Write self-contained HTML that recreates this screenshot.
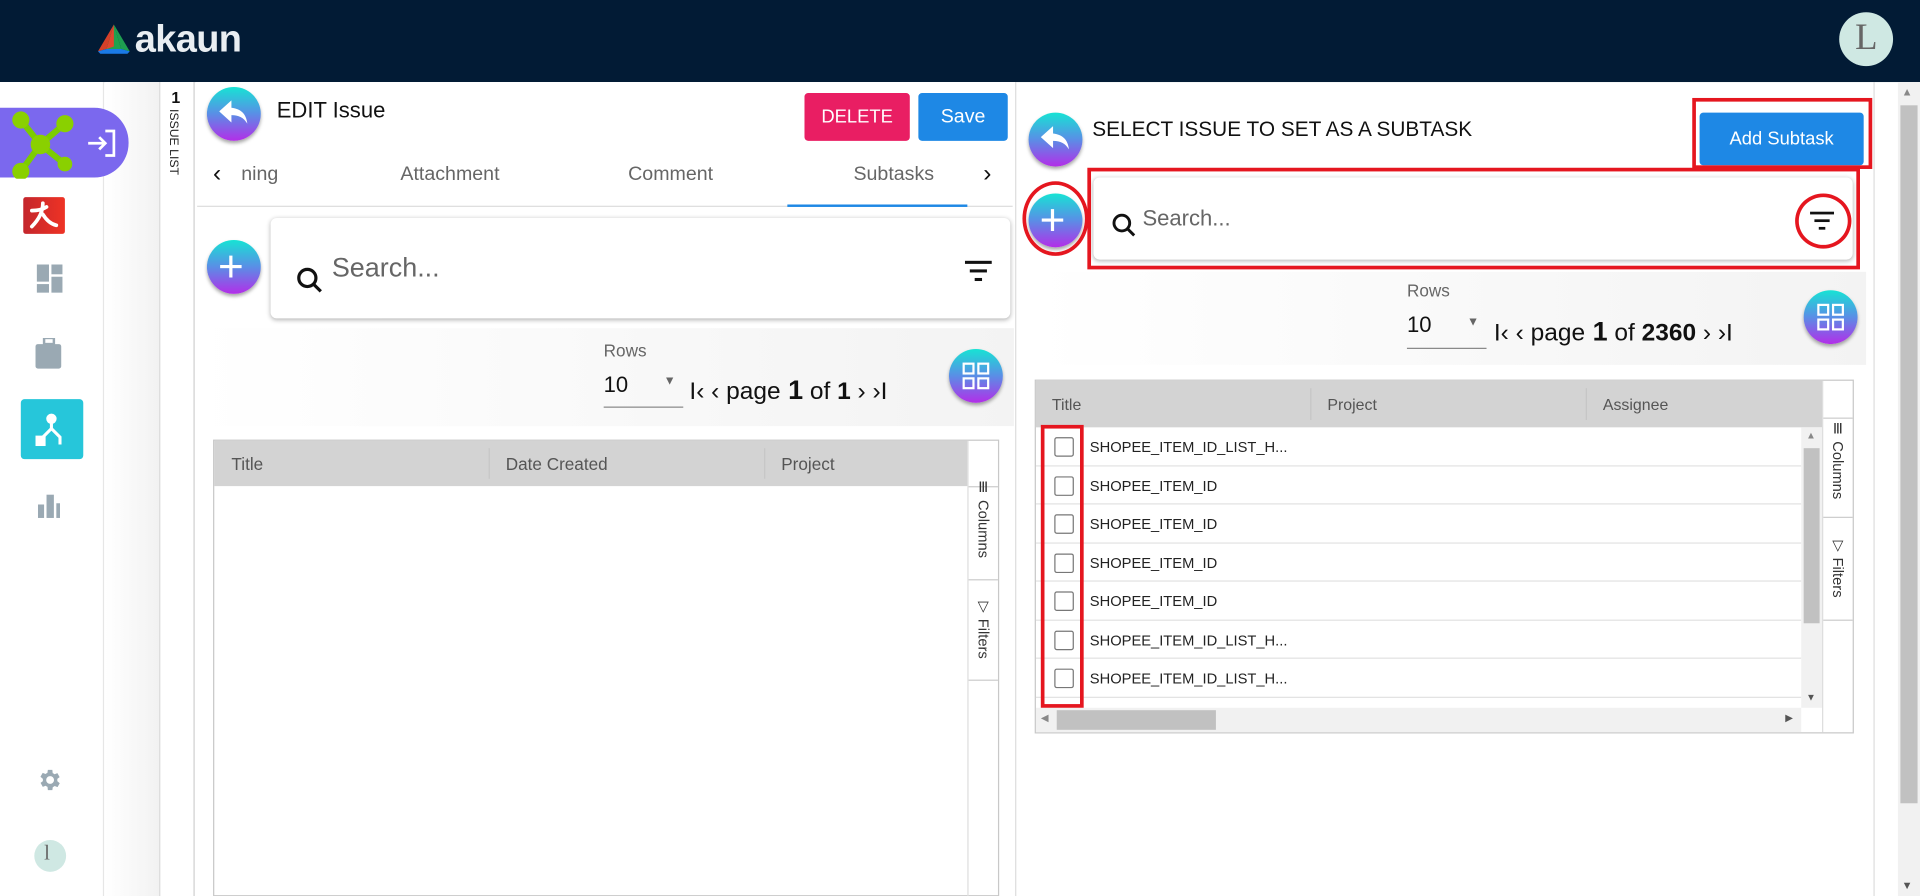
<!DOCTYPE html>
<html><head><meta charset="utf-8">
<style>
*{box-sizing:border-box;margin:0;padding:0}
html,body{width:1920px;height:896px;overflow:hidden;background:#fff;font-family:"Liberation Sans",sans-serif}
#w{position:absolute;left:0;top:0;width:1568px;height:732px;transform:scale(1.22449);transform-origin:0 0;overflow:hidden}
.a{position:absolute}
.hdr{left:0;top:0;width:1568px;height:67px;background:#021b35}
.circ{position:absolute;border-radius:50%;background:linear-gradient(180deg,#17e3d4 0%,#5a8ee6 50%,#b32ee8 100%);box-shadow:0 2px 3px rgba(0,0,0,.35)}
.btn{position:absolute;color:#fff;font-size:15px;display:flex;align-items:center;justify-content:center;border-radius:3px}
.card{position:absolute;background:#fff;border-radius:5px;box-shadow:0 1px 4px rgba(0,0,0,.3)}
.hd{position:absolute;background:#d3d3d3;color:#555;font-size:14px}
.t{position:absolute;white-space:nowrap}
.vt{position:absolute;writing-mode:vertical-rl;font-size:12px;color:#333;white-space:nowrap}
.red{position:absolute;border:3px solid #e5161f}
.row{position:absolute;left:0;width:625px;height:31.5px;border-bottom:1px solid #e2e2e2;font-size:12px;color:#222}
.cb{position:absolute;left:15px;top:8px;width:16px;height:16px;border:1.5px solid #777;border-radius:2px;background:#fff}
</style></head><body><div id="w">
<div class="a hdr"></div>
<svg class="a" style="left:80px;top:20px" width="26" height="24" viewBox="0 0 26 24"><path d="M13 0L0 22 7 20Z" fill="#d64029"/><path d="M13 0L26 22 19 20Z" fill="#1e9e50"/><path d="M13 0L7 20 19 20Z" fill="#1fa24f"/><path d="M0 22L7 20 19 20 26 22 24 24 2 24Z" fill="#1a7ae6"/><path d="M13 0L7 20 13 18Z" fill="#e0462f"/></svg>
<div class="t" style="left:110px;top:14px;color:#e9eef2;font-size:31px;font-weight:bold;letter-spacing:-0.5px">akaun</div>
<div class="a" style="left:1502px;top:10px;width:44px;height:44px;border-radius:50%;background:#cfe8e3"></div>
<div class="t" style="left:1515px;top:14px;font-family:'Liberation Serif',serif;font-size:30px;color:#666">L</div>

<!-- sidebar -->
<div class="a" style="left:0;top:67px;width:85px;height:665px;background:#fff;border-right:1px solid #e6e6e6"></div>
<div class="a" style="left:86px;top:67px;width:45px;height:665px;background:linear-gradient(90deg,#fff,#f2f2f2);border-right:1px solid #d8d8d8"></div>
<div class="a" style="left:0;top:88px;width:105px;height:57px;background:#7b68ee;border-radius:0 28px 28px 0"></div>
<svg class="a" style="left:5px;top:88px" width="56" height="58" viewBox="0 0 56 58"><g stroke="#7ccc00" stroke-width="5"><line x1="12" y1="10" x2="28" y2="30"/><line x1="48" y1="13" x2="28" y2="30"/><line x1="28" y1="30" x2="48" y2="46"/><line x1="28" y1="30" x2="12" y2="52"/></g><g fill="#8ad000"><circle cx="12" cy="10" r="7"/><circle cx="48" cy="13" r="7"/><circle cx="28" cy="30" r="8"/><circle cx="48" cy="46" r="6"/><circle cx="12" cy="52" r="7"/></g></svg>
<svg class="a" style="left:70px;top:104px" width="28" height="26" viewBox="0 0 28 26" fill="none" stroke="#fff" stroke-width="2.2"><path d="M2 13h14M11 8l5 5-5 5"/><path d="M16 3h7v20h-7"/></svg>
<div class="a" style="left:19px;top:161px;width:34px;height:30px;background:linear-gradient(90deg,#c4262c,#ee3325);border-radius:2px"></div>
<svg class="a" style="left:22px;top:164px" width="28" height="24" viewBox="0 0 28 24" fill="none" stroke="#fff" stroke-width="3" stroke-linecap="round"><path d="M4 8c5 0 9-1 12-3M13 2c0 8-4 14-9 19M13 11c3 5 7 8 11 9"/></svg>
<svg class="a" style="left:30px;top:216px" width="22" height="24" viewBox="0 0 22 24" fill="#9aa9b3"><rect x="0" y="0" width="10" height="14"/><rect x="12" y="0" width="9" height="8"/><rect x="0" y="16" width="10" height="7"/><rect x="12" y="10" width="9" height="13"/></svg>
<svg class="a" style="left:29px;top:276px" width="22" height="26" viewBox="0 0 22 26" fill="#9aa9b3"><rect x="7" y="0" width="8" height="5" fill="none" stroke="#9aa9b3" stroke-width="2"/><rect x="0" y="5" width="21" height="20" rx="2"/></svg>
<div class="a" style="left:17px;top:326px;width:51px;height:49px;background:#26c6da;border-radius:3px"></div>
<svg class="a" style="left:29px;top:337px" width="28" height="28" viewBox="0 0 28 28" fill="none" stroke="#fff" stroke-width="2.5"><circle cx="13" cy="5" r="3" fill="#fff"/><path d="M13 7v6M13 13l-8 8M13 13l7 7v6"/><rect x="1" y="20" width="6" height="6" fill="#fff"/></svg>
<svg class="a" style="left:31px;top:400px" width="20" height="24" viewBox="0 0 20 24" fill="#9aa9b3"><rect x="0" y="12" width="5" height="11"/><rect x="7" y="4" width="6" height="19"/><rect x="15" y="11" width="3" height="12"/></svg>
<svg class="a" style="left:29px;top:626px" width="22" height="22" viewBox="0 0 24 24" fill="#9aa9b3"><path d="M19.4 13a7.5 7.5 0 000-2l2.1-1.6-2-3.5-2.5 1a7 7 0 00-1.7-1L15 3h-4l-.4 2.6a7 7 0 00-1.7 1l-2.5-1-2 3.5L6.6 11a7.5 7.5 0 000 2l-2.1 1.6 2 3.5 2.5-1a7 7 0 001.7 1L11 21h4l.4-2.6a7 7 0 001.7-1l2.5 1 2-3.5zM13 15.5a3.5 3.5 0 110-7 3.5 3.5 0 010 7z"/></svg>
<div class="a" style="left:28px;top:686px;width:26px;height:26px;border-radius:50%;background:#cfe8e3"></div>
<div class="t" style="left:36px;top:687px;font-family:'Liberation Serif',serif;font-size:17px;color:#666">l</div>

<div class="a" style="left:131px;top:67px;width:28px;height:665px;background:#fff;border-right:1px solid #cfcfcf"></div>
<div class="t" style="left:140px;top:72px;font-size:13px;font-weight:bold;color:#111">1</div>
<div class="vt" style="left:136px;top:89px;font-size:10px;color:#222">ISSUE LIST</div>

<!-- left panel -->
<div class="a" style="left:160px;top:67px;width:670px;height:665px;background:#fff;border-right:1px solid #ddd"></div>
<div class="circ" style="left:169px;top:71px;width:44px;height:44px"></div>
<svg class="a" style="left:179px;top:82px" width="24" height="20" viewBox="0 0 24 20"><path d="M10 0L0 9l10 9v-6c6 0 10 2 13 7-1-8-5-12-13-13z" fill="#fff"/></svg>
<div class="t" style="left:226px;top:80px;font-size:18px;color:#111">EDIT Issue</div>
<div class="btn" style="left:657px;top:76px;width:86px;height:39px;background:#e91e63">DELETE</div>
<div class="btn" style="left:750px;top:76px;width:73px;height:39px;background:#1e88e5;font-size:16px">Save</div>
<div class="a" style="left:161px;top:168px;width:666px;height:1px;background:#ddd"></div>
<div class="t" style="left:174px;top:131px;font-size:20px;color:#111">‹</div>
<div class="t" style="left:197px;top:134px;font-size:16px;color:#666">ning</div>
<div class="t" style="left:327px;top:134px;font-size:16px;color:#666">Attachment</div>
<div class="t" style="left:513px;top:134px;font-size:16px;color:#666">Comment</div>
<div class="t" style="left:697px;top:134px;font-size:16px;color:#666">Subtasks</div>
<div class="a" style="left:643px;top:167px;width:147px;height:2px;background:#1e88e5"></div>
<div class="t" style="left:803px;top:131px;font-size:20px;color:#111">›</div>
<div class="circ" style="left:169px;top:196px;width:44px;height:44px"></div>
<div class="t" style="left:178px;top:196px;font-size:36px;color:#fff;line-height:44px">+</div>
<div class="card" style="left:221px;top:178px;width:604px;height:82px"></div>
<svg class="a" style="left:241px;top:217px" width="24" height="24" viewBox="0 0 24 24" fill="none" stroke="#111" stroke-width="2.6"><circle cx="10" cy="10" r="7"/><path d="M15 15l6 6"/></svg>
<div class="t" style="left:271px;top:206px;font-size:22px;color:#666">Search...</div>
<svg class="a" style="left:788px;top:212px" width="22" height="18" viewBox="0 0 22 18" fill="#111"><rect x="0" y="1" width="22" height="2.5"/><rect x="4" y="8" width="14" height="2.5"/><rect x="8" y="15" width="6" height="2.5"/></svg>
<div class="a" style="left:160px;top:268px;width:668px;height:80px;background:linear-gradient(90deg,#fff,#f3f3f3)"></div>
<div class="t" style="left:493px;top:278px;font-size:14px;color:#666">Rows</div>
<div class="t" style="left:493px;top:304px;font-size:18px;color:#111">10</div>
<div class="t" style="left:542px;top:306px;font-size:10px;color:#666">▼</div>
<div class="a" style="left:493px;top:332px;width:65px;height:1px;background:#888"></div>
<div class="t" style="left:563px;top:306px;font-size:20px;color:#111">I‹ ‹ page<b style="font-size:22px"> 1</b> of <b>1</b> › ›I</div>
<div class="circ" style="left:775px;top:285px;width:44px;height:44px"></div>
<svg class="a" style="left:785px;top:295px" width="24" height="24" viewBox="0 0 24 24" fill="none" stroke="#fff" stroke-width="1.8"><rect x="2" y="2" width="8" height="8"/><rect x="14" y="2" width="8" height="8"/><rect x="2" y="14" width="8" height="8"/><rect x="14" y="14" width="8" height="8"/></svg>
<div class="a" style="left:174px;top:359px;width:642px;height:373px;border:1px solid #c8c8c8"></div>
<div class="hd" style="left:175px;top:360px;width:615px;height:37px"></div>
<div class="t" style="left:189px;top:371px;font-size:14px;color:#555">Title</div>
<div class="a" style="left:399px;top:366px;width:1px;height:25px;background:#c6c6c6"></div>
<div class="t" style="left:413px;top:371px;font-size:14px;color:#555">Date Created</div>
<div class="a" style="left:624px;top:366px;width:1px;height:25px;background:#c6c6c6"></div>
<div class="t" style="left:638px;top:371px;font-size:14px;color:#555">Project</div>
<div class="a" style="left:790px;top:360px;width:1px;height:372px;background:#ddd"></div>
<div class="a" style="left:791px;top:397px;width:24px;height:1px;background:#ccc"></div>
<div class="vt" style="left:796px;top:391px">Ⅲ Columns</div>
<div class="a" style="left:791px;top:473px;width:24px;height:1px;background:#ccc"></div>
<div class="vt" style="left:796px;top:488px">▽ Filters</div>
<div class="a" style="left:791px;top:555px;width:24px;height:1px;background:#ccc"></div>

<!-- right panel -->
<div class="circ" style="left:840px;top:92px;width:44px;height:44px"></div>
<svg class="a" style="left:850px;top:103px" width="24" height="20" viewBox="0 0 24 20"><path d="M10 0L0 9l10 9v-6c6 0 10 2 13 7-1-8-5-12-13-13z" fill="#fff"/></svg>
<div class="t" style="left:892px;top:96px;font-size:17px;color:#111">SELECT ISSUE TO SET AS A SUBTASK</div>
<div class="btn" style="left:1388px;top:92px;width:134px;height:43px;background:#1e88e5">Add Subtask</div>
<div class="red" style="left:1382px;top:80px;width:147px;height:58px"></div>
<div class="circ" style="left:840px;top:158px;width:44px;height:44px"></div>
<div class="t" style="left:849px;top:158px;font-size:36px;color:#fff;line-height:44px">+</div>
<div class="a" style="left:835px;top:148px;width:54px;height:61px;border:3px solid #e5161f;border-radius:50%"></div>
<div class="card" style="left:893px;top:145px;width:620px;height:67px"></div>
<div class="red" style="left:888px;top:137px;width:631px;height:83px"></div>
<svg class="a" style="left:907px;top:173px" width="22" height="22" viewBox="0 0 24 24" fill="none" stroke="#111" stroke-width="2.6"><circle cx="10" cy="10" r="7"/><path d="M15 15l6 6"/></svg>
<div class="t" style="left:933px;top:168px;font-size:18px;color:#666">Search...</div>
<svg class="a" style="left:1478px;top:172px" width="20" height="16" viewBox="0 0 22 18" fill="#111"><rect x="0" y="1" width="22" height="2.5"/><rect x="4" y="8" width="14" height="2.5"/><rect x="8" y="15" width="6" height="2.5"/></svg>
<div class="a" style="left:1466px;top:158px;width:46px;height:45px;border:3px solid #e5161f;border-radius:50%"></div>
<div class="a" style="left:845px;top:222px;width:679px;height:76px;background:linear-gradient(90deg,#fff,#f3f3f3)"></div>
<div class="t" style="left:1149px;top:229px;font-size:14px;color:#666">Rows</div>
<div class="t" style="left:1149px;top:255px;font-size:18px;color:#111">10</div>
<div class="t" style="left:1198px;top:258px;font-size:10px;color:#666">▼</div>
<div class="a" style="left:1149px;top:284px;width:65px;height:1px;background:#888"></div>
<div class="t" style="left:1220px;top:258px;font-size:20px;color:#111">I‹ ‹ page<b style="font-size:22px"> 1</b> of <b> 2360</b> › ›I</div>
<div class="circ" style="left:1473px;top:237px;width:44px;height:44px"></div>
<svg class="a" style="left:1483px;top:247px" width="24" height="24" viewBox="0 0 24 24" fill="none" stroke="#fff" stroke-width="1.8"><rect x="2" y="2" width="8" height="8"/><rect x="14" y="2" width="8" height="8"/><rect x="2" y="14" width="8" height="8"/><rect x="14" y="14" width="8" height="8"/></svg>

<div class="a" style="left:845px;top:310px;width:669px;height:289px;border:1px solid #c8c8c8;overflow:hidden">
 <div class="hd" style="left:0;top:0;width:642px;height:38px"></div>
 <div class="t" style="left:13px;top:12px;font-size:13px;color:#555">Title</div>
 <div class="a" style="left:224px;top:6px;width:1px;height:26px;background:#c6c6c6"></div>
 <div class="t" style="left:238px;top:12px;font-size:13px;color:#555">Project</div>
 <div class="a" style="left:449px;top:6px;width:1px;height:26px;background:#c6c6c6"></div>
 <div class="t" style="left:463px;top:12px;font-size:13px;color:#555">Assignee</div>
 <div class="row" style="top:38px"><div class="cb"></div><span class="t" style="left:44px;top:9px">SHOPEE_ITEM_ID_LIST_H...</span></div>
 <div class="row" style="top:69.5px"><div class="cb"></div><span class="t" style="left:44px;top:9px">SHOPEE_ITEM_ID</span></div>
 <div class="row" style="top:101px"><div class="cb"></div><span class="t" style="left:44px;top:9px">SHOPEE_ITEM_ID</span></div>
 <div class="row" style="top:132.5px"><div class="cb"></div><span class="t" style="left:44px;top:9px">SHOPEE_ITEM_ID</span></div>
 <div class="row" style="top:164px"><div class="cb"></div><span class="t" style="left:44px;top:9px">SHOPEE_ITEM_ID</span></div>
 <div class="row" style="top:195.5px"><div class="cb"></div><span class="t" style="left:44px;top:9px">SHOPEE_ITEM_ID_LIST_H...</span></div>
 <div class="row" style="top:227px"><div class="cb"></div><span class="t" style="left:44px;top:9px">SHOPEE_ITEM_ID_LIST_H...</span></div>
 <div class="a" style="left:625px;top:38px;width:17px;height:229px;background:#f1f1f1"></div>
 <div class="a" style="left:627px;top:55px;width:13px;height:143px;background:#c1c1c1"></div>
 <div class="t" style="left:629px;top:40px;font-size:8px;color:#888">▲</div>
 <div class="t" style="left:629px;top:254px;font-size:8px;color:#555">▼</div>
 <div class="a" style="left:0;top:267px;width:625px;height:20px;background:#f1f1f1"></div>
 <div class="a" style="left:17px;top:269px;width:130px;height:16px;background:#c1c1c1"></div>
 <div class="t" style="left:4px;top:271px;font-size:8px;color:#888">◀</div>
 <div class="t" style="left:612px;top:271px;font-size:8px;color:#555">▶</div>
 <div class="a" style="left:642px;top:0;width:1px;height:289px;background:#ddd"></div>
 <div class="a" style="left:643px;top:30px;width:26px;height:1px;background:#ccc"></div>
 <div class="vt" style="left:648px;top:32px">Ⅲ Columns</div>
 <div class="a" style="left:643px;top:111px;width:26px;height:1px;background:#ccc"></div>
 <div class="vt" style="left:648px;top:127px">▽ Filters</div>
 <div class="a" style="left:643px;top:195px;width:26px;height:1px;background:#ccc"></div>
</div>
<div class="red" style="left:850px;top:347px;width:35px;height:231px"></div>

<!-- page scrollbar -->
<div class="a" style="left:1530px;top:67px;width:1px;height:665px;background:#ddd"></div>
<div class="a" style="left:1550px;top:67px;width:18px;height:665px;background:#f1f1f1"></div>
<div class="a" style="left:1552px;top:86px;width:14px;height:570px;background:#c1c1c1"></div>
<div class="t" style="left:1553px;top:70px;font-size:9px;color:#888">▲</div>
<div class="t" style="left:1553px;top:718px;font-size:9px;color:#555">▼</div>
</div></body></html>
